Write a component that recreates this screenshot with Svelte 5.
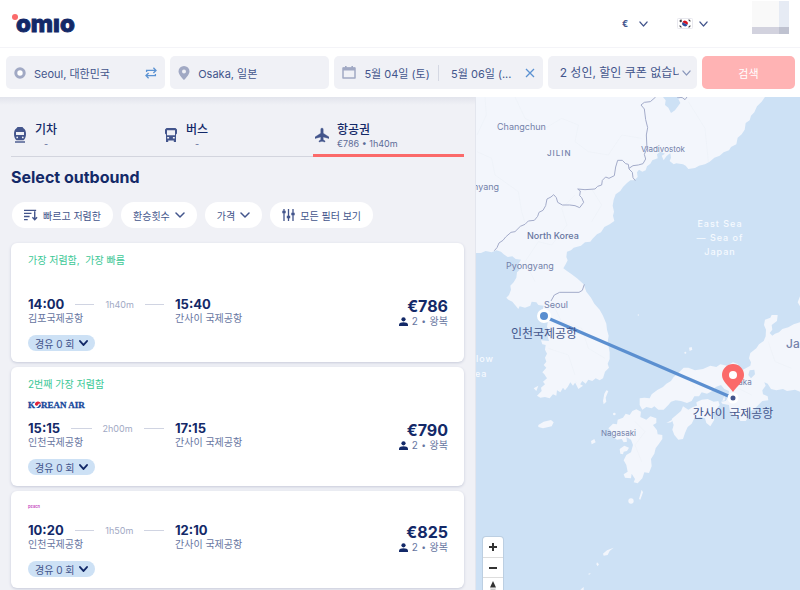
<script>
  let from = $state('Seoul, 대한민국');
  let to = $state('Osaka, 일본');
  let active = $state('flight');

  const tabs = [
    { id: 'train', name: '기차', note: '-' },
    { id: 'bus', name: '버스', note: '-' },
    { id: 'flight', name: '항공권', note: '€786 • 1h40m' }
  ];

  const trips = [
    { tag: '가장 저렴함,  가장 빠름', carrier: '', dep: '14:00', arr: '15:40', origin: '김포국제공항', duration: '1h40m', price: '€786' },
    { tag: '2번째 가장 저렴함', carrier: 'korean', dep: '15:15', arr: '17:15', origin: '인천국제공항', duration: '2h00m', price: '€790' },
    { tag: '', carrier: 'peach', dep: '10:20', arr: '12:10', origin: '인천국제공항', duration: '1h50m', price: '€825' }
  ];

  function swap() {
    [from, to] = [to, from];
  }
</script>

{#snippet chevron(w, weight)}
  <svg class="chevron" width={w} height="6" viewBox="0 0 10 6" preserveAspectRatio="none" aria-hidden="true">
    <path d="M1 1l4 4 4-4" fill="none" stroke="currentColor" stroke-width={weight} stroke-linecap="round" stroke-linejoin="round" />
  </svg>
{/snippet}

<div class="page">
  <header class="top">
    <a class="logo" href="/" aria-label="omio">
      <svg width="72" height="28" viewBox="0 0 72 28" aria-hidden="true">
        <circle cx="4" cy="7" r="3" fill="#fb6a6a" />
        <text x="5" y="22">omıo</text>
      </svg>
    </a>
    <div class="prefs">
      <label class="currency">
        <select aria-label="통화"><option>€</option></select>
        {@render chevron(9, 1.3)}
      </label>
      <button class="lang" aria-label="한국어">
        <svg width="16" height="11" viewBox="0 0 16 11" aria-hidden="true">
          <rect x=".5" y=".5" width="15" height="10" rx="1" fill="#fff" stroke="#e8e8ee" />
          <path d="M5.2 5.5a2.8 2.8 0 0 1 5.6 0z" fill="#d5131f" transform="rotate(25 8 5.5)" />
          <path d="M5.2 5.5a2.8 2.8 0 0 0 5.6 0z" fill="#2c4a9c" transform="rotate(25 8 5.5)" />
          <path d="M2.6 3.4l1.8-1.8M3.4 4.2l1.4-1.6M11.6 1.6l1.8 1.8M2.6 7.6l1.8 1.8M11.6 9.4l1.8-1.8" stroke="#3a3a40" stroke-width="1.1" />
        </svg>
        {@render chevron(9, 1.3)}
      </button>
      <div class="avatar"><i></i><i></i><i></i><i></i></div>
    </div>
  </header>

  <form class="search" onsubmit={(e) => e.preventDefault()}>
    <div class="field">
      <svg width="12" height="12" viewBox="0 0 12 12" aria-hidden="true"><circle cx="6" cy="6" r="4.2" fill="#fff" stroke="#a1a9c4" stroke-width="3" /></svg>
      <input aria-label="출발지" bind:value={from} />
      <button type="button" class="icon" aria-label="바꾸기" onclick={swap}>
        <svg width="12" height="12" viewBox="0 0 12 12" aria-hidden="true"><path d="M1.600 5V3.400H11M8.400.8L11 3.400 8.400 6M10.400 7v1.600H1M3.600 6L1 8.600l2.600 2.600" fill="none" stroke="#5b92d2" stroke-width="1.300" /></svg>
      </button>
    </div>
    <div class="field">
      <svg width="12" height="14" viewBox="0 0 12 14" aria-hidden="true"><path d="M6 0a5.5 5.5 0 0 0-5.5 5.5C.5 9 6 14 6 14s5.5-5 5.5-8.5A5.5 5.5 0 0 0 6 0zm0 3.5a2 2 0 1 1 0 4 2 2 0 0 1 0-4z" fill="#a1a9c4" fill-rule="evenodd" /></svg>
      <input aria-label="도착지" bind:value={to} />
    </div>
    <div class="field dates">
      <svg width="14" height="13" viewBox="0 0 14 13" aria-hidden="true"><path d="M1 2h12v10H1z" fill="none" stroke="#a1a9c4" stroke-width="1.5" stroke-linejoin="round" /><path d="M1 1.6h12v3H1zM3 0h1.6v2H3zM9.4 0H11v2H9.4z" fill="#a1a9c4" /></svg>
      <input aria-label="가는 날" value="5월 04일 (토)" />
      <span class="rule"></span>
      <input aria-label="오는 날" value="5월 06일 (..." />
      <button type="button" class="icon" aria-label="지우기">
        <svg width="10" height="10" viewBox="0 0 10 10" aria-hidden="true"><path d="M1 1l8 8M9 1L1 9" stroke="#5b92d2" stroke-width="1.3" /></svg>
      </button>
    </div>
    <label class="field people">
      <select aria-label="승객"><option>2 성인, 할인 쿠폰 없습니다</option></select>
      {@render chevron(9, 1.2)}
    </label>
    <button class="go">검색</button>
  </form>

  <main>
    <section class="results">
      <div class="tabs" role="tablist">
        {#each tabs as tab}
          <button role="tab" class:active={active === tab.id} aria-selected={active === tab.id} onclick={() => (active = tab.id)}>
            {#if tab.id === 'train'}
              <svg width="14" height="16" viewBox="0 0 14 16" aria-hidden="true"><path d="M4.500 0h5l1 1.200C12.300 2.200 13 4.500 13 7c0 3-1 5-2.500 6.200h-7C2 12 1 10 1 7c0-2.500.7-4.800 2.500-5.800zM3 5v3h8V5zM4.200 9.500a.9.900 0 1 0 0 1.800.9.900 0 0 0 0-1.800zm5.600 0a.9.900 0 1 0 0 1.800.9.900 0 0 0 0-1.800z" fill="#43558c" fill-rule="evenodd" /><path d="M2 15h10" stroke="#43558c" stroke-width="1.400" /></svg>
            {:else if tab.id === 'bus'}
              <svg width="14" height="16" viewBox="0 0 14 16" aria-hidden="true"><path d="M2.500 1h9L13 2.500v4l-1 1V15H9.800v-1.600H4.200V15H2V7.500l-1-1v-4zM3 3.200v5h8v-5zM3.200 10v1.600h1.900V10zm5.700 0v1.600h1.900V10z" fill="#43558c" fill-rule="evenodd" /></svg>
            {:else}
              <svg width="14" height="16" viewBox="0 0 14 16" aria-hidden="true"><path d="M7 1c.8 0 1.200.8 1.200 1.800v3.500L14 10v1.500l-5.800-1.600v2.800l1.800 1.200V15L7 14.300 4 15v-1.100l1.800-1.200V9.900L0 11.500V10l5.800-3.700V2.800C5.800 1.800 6.200 1 7 1z" fill="#43558c" stroke="#43558c" stroke-width=".4" /></svg>
            {/if}
            <span class="words"><strong>{tab.name}</strong><small>{tab.note}</small></span>
          </button>
        {/each}
      </div>

      <h1>Select outbound</h1>

      <div class="filters">
        <button>
          <svg width="14" height="12" viewBox="0 0 15 12" aria-hidden="true"><path d="M0 1h13M0 4.300h8M0 7.600h6M0 11h4M11.500 2v9M9 8.500l2.500 2.500L14 8.500" fill="none" stroke="#43558c" stroke-width="1.500" /></svg>
          빠르고 저렴한
        </button>
        <button>환승횟수 {@render chevron(10, 1.5)}</button>
        <button>가격 {@render chevron(10, 1.5)}</button>
        <button>
          <svg width="13" height="12" viewBox="0 0 13 12" aria-hidden="true"><path d="M2 0v12M6.500 0v12M11 0v12" stroke="#43558c" stroke-width="1.300" /><path d="M.3 3h3.400M4.800 8h3.400M9.300 5h3.400" stroke="#43558c" stroke-width="2.600" /></svg>
          모든 필터 보기
        </button>
      </div>

      {#each trips as trip}
        <article>
          {#if trip.tag}<p class="tag">{trip.tag}</p>{/if}
          <div class="carrier">
            {#if trip.carrier === 'korean'}
              <span class="korean">K<svg width="6" height="8" viewBox="0 0 6 8" aria-hidden="true"><path d="M0 4a3 3 0 0 1 6-1L4 2.500 2 5z" fill="#e0263c" /><path d="M6 4a3 3 0 0 1-5 2.300L3 6l2-3z" fill="#17499c" /></svg>REAN AIR</span>
            {:else if trip.carrier === 'peach'}
              <span class="peach">peach</span>
            {/if}
          </div>
          <div class="body">
            <div class="leg out">
              <div class="time"><strong>{trip.dep}</strong><i></i><span>{trip.duration}</span><i></i></div>
              <p>{trip.origin}</p>
            </div>
            <div class="leg">
              <div class="time"><strong>{trip.arr}</strong></div>
              <p>간사이 국제공항</p>
            </div>
            <div class="price">
              <strong>{trip.price}</strong>
              <p>
                <svg width="9" height="9" viewBox="0 0 9 9" aria-hidden="true"><circle cx="4.500" cy="2.300" r="2.100" fill="#132968" /><path d="M0 9V7.500C0 6 2.500 5.300 4.500 5.300S9 6 9 7.500V9z" fill="#132968" /></svg>
                2 <b>•</b> 왕복
              </p>
            </div>
          </div>
          <button class="stops">경유 0 회 {@render chevron(9, 1.8)}</button>
        </article>
      {/each}
    </section>

    <aside class="map" aria-label="지도">
      <svg class="canvas" viewBox="0 0 324 493" preserveAspectRatio="xMinYMin slice">
        <g transform="translate(-1 -2) scale(.333333)">
          <g class="land">
            <path d="M0 0H874L860 20 846 34 838 52 828 62 824 76 812 84 809 104 800 118 788 128 784 148 768 156 762 166 746 172 734 182 718 188 704 200 690 208 672 212 660 219 640 222 632 212 624 208 604 205 596 208 584 198 588 188 586 174 574 184 566 196 560 182 570 176 556 170 546 178 548 190 532 196 526 206 516 214 512 226 502 230 492 224 486 232 488 246 478 256 466 256 456 264 444 276 436 288 422 298 416 314 413 332 417 350 414 362 418 378 404 388 388 396 378 412 366 418 352 432 346 440 330 442 318 452 296 458 288 466 276 470 274 486 278 496 272 508 265 520 276 528 290 538 306 550 326 568 334 590 348 608 358 626 374 644 384 662 394 686 396 704 401 722 398 740 404 772 404 792 398 806 402 818 390 830 384 850 374 856 362 850 352 858 340 854 332 866 322 858 314 870 302 860 294 872 286 862 278 876 270 886 264 878 256 892 246 886 244 902 234 898 224 910 210 906 196 908 186 902 200 888 198 878 210 868 204 860 216 850 208 838 202 832 214 818 206 810 214 800 210 788 216 776 210 764 212 750 202 748 198 736 222 738 218 724 224 712 216 696 218 682 206 674 200 656 204 640 206 632 190 630 184 622 170 620 166 632 150 638 134 634 130 642 122 632 112 620 100 614 94 608 102 600 108 584 106 572 116 562 124 548 126 532 134 524 130 508 138 494 122 492 112 484 98 486 86 478 78 470 64 466 50 472 32 468 18 474 0 474Z" />
            <path d="M975 682L956 688 940 697 922 702 912 712 900 716 892 722 884 714 892 704 890 690 906 678 908 660 890 660 886 668 870 674 867 690 873 704 872 724 866 738 852 748 844 760 826 774 822 790 828 802 826 812 804 824 786 818 790 808 774 802 756 812 736 808 724 816 706 812 684 822 660 826 640 818 626 818 610 834 596 846 588 858 574 866 564 876 548 884 530 898 524 910 508 908 494 910 494 930 502 944 514 936 530 940 538 934 550 944 566 944 580 930 588 920 602 916 618 918 636 924 650 918 658 904 672 904 680 892 696 896 716 886 722 876 738 870 748 882 762 888 760 906 752 918 738 920 742 926 762 930 764 946 776 962 790 966 796 978 812 978 818 970 824 950 838 942 850 930 862 918 880 916 878 904 864 898 862 886 872 872 868 862 878 866 888 882 904 886 924 882 936 888 960 884 975 890Z" />
            <path d="M590 972L604 960 618 948 624 934 640 944 654 936 666 932 664 922 680 914 698 912 716 920 730 918 734 930 722 946 714 958 718 974 706 994 694 984 690 970 676 966 658 970 650 986 638 996 630 1014 624 1032 610 1034 598 1020 592 1004 596 990Z" />
            <path d="M484 943L498 950 496 966 514 974 526 964 544 970 544 984 534 990 546 1006 548 1018 562 1020 562 1032 552 1046 542 1060 538 1076 528 1092 530 1114 522 1134 508 1132 502 1150 488 1165 476 1162 480 1152 470 1136 468 1150 450 1148 446 1138 458 1130 454 1110 446 1096 454 1080 468 1072 474 1050 468 1034 454 1026 456 1040 446 1042 440 1032 426 1034 414 1026 410 1010 400 1000 414 986 426 988 428 974 444 968 452 956 464 960 472 948Z" />
            <path d="M434 1062L448 1052 462 1058 456 1068 446 1070 444 1078 436 1076ZM190 990L206 980 228 975 236 982 230 994 204 1000 190 996ZM388 896L394 886 400 888 392 908 394 920 386 928 384 918ZM348 1038L358 1032 362 1042 350 1048ZM500 1184L504 1192 496 1214 492 1212ZM384 1376L396 1366 416 1358 404 1368 398 1380 386 1382ZM366 1402L372 1408 368 1414 364 1408ZM316 1484L326 1476 326 1485ZM742 918L748 902 750 916ZM600 970L588 982 574 984ZM642 758L650 756 652 764 644 768ZM340 1436L348 1434 342 1440ZM176 880L190 872 184 888ZM298 858L324 872 310 882ZM975 604L968 622 975 634Z" />
            <circle cx="468" cy="1218" r="8" /><circle cx="631" cy="773" r="3" /><circle cx="490" cy="660" r="2" /><circle cx="418" cy="957" r="4" />
          </g>
          <path d="M564 6L572 16 570 30 580 38 588 54 600 46 616 24 610 12 624 6ZM824 826L838 824 840 838 828 850 820 840Z" fill="#cde1f5" />
          <g class="faint"><path d="M30 6L34 60 6 120M120 6L150 70 210 100 260 70 310 90 300 140 340 170 400 180 440 120 500 130M6 170L50 190 60 240 130 290 140 350 150 384M300 300L260 340 276 390 230 450 190 440 150 500 180 560M350 282L380 330 350 380M230 620L260 680 320 700 340 760 390 790M220 760L280 780 300 840M640 20L690 100 700 200M480 980L510 1010 480 1050 500 1100M640 850L660 880M880 740L900 800 950 820M790 880L830 900" /></g>
          <g class="border">
            <path d="M58 467L66 458 72 444 84 436 92 426 108 412 120 410 136 394 150 388 160 378 178 376 188 364 192 352 204 346 212 332 216 312 228 306 236 299 244 308 248 322 262 330 284 330 300 332 314 338 326 322 320 308 314 302 316 288 308 282 330 284 360 282 368 274 380 270 382 256 392 246 402 250 418 242 422 216 428 196 442 196 452 206 460 208 462 222 472 232 474 248 481 257M462 220L474 212 490 210 504 206 512 192 508 178 516 160 514 120 518 98 512 74 508 42 498 30 508 22 526 20 542 6M606 6L622 8 630 14 636 6M228 618L238 600 254 592 312 592 322 586 328 568" />
          </g>
        </g>
        <path d="M67 219L257 301" stroke="#5b8fd0" stroke-width="3" />
        <g class="city">
          <text x="21" y="33">Changchun</text>
          <text x="-3" y="93">nyang</text>
          <text x="51" y="142" class="country">North Korea</text>
          <text x="30" y="172">Pyongyang</text>
          <text x="68" y="211">Seoul</text>
          <text x="165" y="55" class="small">Vladivostok</text>
          <text x="125" y="339" class="small">Nagasaki</text>
          <text x="252" y="288" class="small">Osaka</text>
          <text x="71" y="59" class="region">JILIN</text>
          <text x="310" y="251" class="nation">Ja</text>
        </g>
        <g class="sea">
          <text x="244" y="130">East Sea</text>
          <text x="244" y="144">— Sea of</text>
          <text x="244" y="158">Japan</text>
          <text x="0" y="265" class="cut">low</text>
          <text x="-1" y="280" class="cut">ea</text>
        </g>
        <circle cx="68" cy="219" r="5.500" fill="#5b8fd0" stroke="#fff" stroke-width="3" />
        <circle cx="257" cy="301" r="4" fill="#43558c" stroke="#fff" stroke-width="3" />
        <path d="M257 267a11 11 0 0 0-11 11c0 6 6 10 11 17 5-7 11-11 11-17a11 11 0 0 0-11-11z" fill="#fb6a6a" />
        <circle cx="257" cy="278" r="4" fill="#fff" />
        <g class="airport">
          <text x="68" y="241">인천국제공항</text>
          <text x="257" y="321">간사이 국제공항</text>
        </g>
      </svg>
      <div class="zoom">
        <button aria-label="확대"><svg width="10" height="10" viewBox="0 0 10 10" aria-hidden="true"><path d="M5 1v8M1 5h8" stroke="#333" stroke-width="2" /></svg></button>
        <button aria-label="축소"><svg width="10" height="10" viewBox="0 0 10 10" aria-hidden="true"><path d="M1 5h8" stroke="#333" stroke-width="2" /></svg></button>
        <button aria-label="북쪽"><svg width="8" height="14" viewBox="0 0 8 14" aria-hidden="true"><path d="M1 6.500L4 0l3 6.500z" fill="#333" /><path d="M1 7.500L4 14l3-6.500z" fill="#ccc" /></svg></button>
      </div>
    </aside>
  </main>
</div>

<style>
  :global(body) { margin: 0; }
  .page {
    font-family: Inter, 'Noto Sans CJK KR', sans-serif;
    color: #43558c;
    font-size: 10px;
    min-height: 100vh;
    display: flex;
    flex-direction: column;
    background: #fff;
    overflow: hidden;
  }
  button, input, select {
    font: inherit;
    color: inherit;
    border: 0;
    padding: 0;
    margin: 0;
    background: none;
    min-width: 0;
    outline-offset: -1px;
  }
  button { cursor: pointer; }
  p, h1 { margin: 0; }
  svg { flex: none; display: block; }

  .top {
    height: 47px;
    display: flex;
    justify-content: space-between;
    align-items: center;
    padding: 0 11px;
    border-bottom: 1px solid #f4f4f8;
  }
  .logo text { font-size: 24px; font-weight: 800; fill: #132968; stroke: #132968; stroke-width: 1; }
  .prefs { display: flex; align-items: center; height: 100%; }
  .currency, .lang { display: flex; align-items: center; color: #43558c; }
  .currency { gap: 9px; margin-right: 29px; font-weight: 700; }
  .currency select { appearance: none; width: 8px; font-size: 9px; }
  .lang { gap: 6px; margin-right: 44px; }
  .avatar {
    align-self: flex-start;
    margin-top: 1px;
    display: grid;
    grid-template: 26px 7px / 27px 10px;
  }
  .avatar i:nth-child(1) { background: #f9f9f9; }
  .avatar i:nth-child(2) { background: #e6ebf4; }
  .avatar i:nth-child(3) { background: #d2d2de; }
  .avatar i:nth-child(4) { background: #bfc2d0; }

  .search {
    display: grid;
    grid-template-columns: 159fr 159fr 208fr 149fr 93fr;
    gap: 5px;
    padding: 8px 5px 8px 6px;
    font-size: 11px;
  }
  .field {
    height: 33px;
    box-sizing: border-box;
    background: #f0f1f6;
    border-radius: 5px;
    display: flex;
    align-items: center;
    gap: 8px;
    padding: 0 8px;
    min-width: 0;
  }
  .field input { flex: 1; width: 0; height: 24px; }
  .dates .rule { width: 1px; height: 16px; background: #d5d8e3; }
  .dates input { flex: 66; }
  .dates input + .rule + input { flex: 66; margin-left: 4px; }
  .people { padding: 0 6px 0 12px; gap: 3px; font-size: 12px; color: #8a97bb; }
  .people select { appearance: none; flex: 1; width: 0; height: 24px; color: #43558c; overflow: hidden; }
  .go { background: #ffb3b4; color: #fff; border-radius: 5px; }

  main {
    flex: 1;
    display: grid;
    grid-template-columns: minmax(0, 476fr) minmax(0, 324fr);
  }
  .results {
    background: linear-gradient(#e2e4ec, #f0f1f6 8px);
    padding: 12px 11px 1px 11px;
    display: flex;
    flex-direction: column;
    border-right: 1px solid #e3e6ee;
  }
  .tabs { display: grid; grid-template-columns: repeat(3, 1fr); height: 48px; }
  .tabs button {
    display: flex;
    align-items: center;
    gap: 8px;
    padding-left: 2px;
    padding-top: 5px;
    border-bottom: 1px solid #d3d5de;
    text-align: left;
  }
  .tabs button.active { border-bottom: 3px solid #fb6a6a; padding-top: 7px; }
  .words { display: flex; flex-direction: column; align-items: center; padding-top: 3px; }
  .active .words { align-items: flex-start; }
  .words strong { font-size: 12px; line-height: 14px; font-weight: 500; color: #132968; }
  .words small { font-size: 9px; line-height: 14px; color: #5d6c98; }
  h1 { font-size: 16px; line-height: 20px; font-weight: 700; color: #132968; margin-top: 10px; }
  .filters { display: flex; gap: 8px; margin: 15px 0; padding-left: 1px; }
  .filters button {
    height: 26px;
    border-radius: 13px;
    background: #fff;
    padding: 0 12px;
    display: flex;
    align-items: center;
    gap: 5px;
    white-space: nowrap;
  }

  article {
    background: #fff;
    border-radius: 6px;
    padding: 11px 16px 11px 17px;
    box-shadow: 0 1px 3px #c6cad9;
  }
  article + article { margin-top: 5px; }
  .tag { color: #3cc896; line-height: 12px; margin-bottom: 10px; white-space: pre; }
  .carrier { height: 10px; margin-bottom: 11px; display: flex; align-items: center; }
  .korean { display: flex; align-items: center; font: bold 9px/10px 'Liberation Serif', serif; color: #17499c; white-space: pre; -webkit-text-stroke: 0.3px #17499c; }
  .peach { font-size: 4px; line-height: 10px; font-weight: 600; color: #c547c0; }
  .body { display: flex; }
  .leg p { line-height: 14px; color: #66759f; }
  .out { width: 147px; }
  .time { display: flex; align-items: center; gap: 11px; height: 14px; padding-right: 11px; color: #a1a9c4; font-size: 9px; }
  .time i { flex: 1; height: 1px; background: #d0d4e2; }
  .time strong { font-size: 13px; font-weight: 700; color: #132968; }
  .price { margin-left: auto; display: flex; flex-direction: column; align-items: flex-end; }
  .price strong { font-size: 16px; line-height: 18px; color: #132968; }
  .price p { display: flex; align-items: center; gap: 4px; line-height: 12px; color: #66759f; }
  .price b { font-size: 8px; }
  .stops {
    margin-top: 8px;
    height: 16px;
    border-radius: 8px;
    padding: 0 7px;
    background: #cde1f5;
    display: flex;
    align-items: center;
    gap: 4px;
  }
  .stops :global(.chevron) { color: #132968; }

  .map { position: relative; overflow: hidden; background: #cde1f5; }
  .canvas { position: absolute; inset: 0; width: 100%; height: 100%; }
  .land { fill: #f3f6fc; }
  .faint { fill: none; stroke: #edf1f8; stroke-width: 2; }
  .border { fill: none; stroke: #a3abc9; stroke-width: 3; stroke-linejoin: round; }
  .city { font-size: 9px; fill: #7482aa; }
  .city .country { fill: #66759f; font-weight: 500; }
  .city .small { font-size: 8px; }
  .city .region { font-size: 8px; font-weight: 500; letter-spacing: 1px; }
  .city .nation { font-size: 12px; font-weight: 500; }
  .sea { font-size: 9px; font-weight: 500; letter-spacing: 1px; fill: #f6faff; text-anchor: middle; }
  .sea .cut { text-anchor: start; }
  .airport { font-size: 12px; fill: #43558c; text-anchor: middle; }
  .zoom {
    position: absolute;
    left: 7px;
    top: 440px;
    width: 20px;
    background: #fff;
    border-radius: 3px;
    box-shadow: 0 0 0 1px #bccfe2;
  }
  .zoom button { width: 20px; height: 20px; display: grid; place-items: center; }
  .zoom button + button { border-top: 1px solid #ddd; }
</style>
